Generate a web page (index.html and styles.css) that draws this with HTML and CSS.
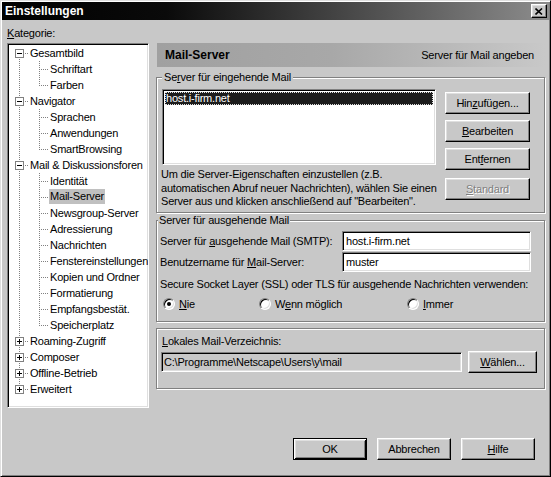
FILE: index.html
```html
<!DOCTYPE html>
<html lang="de">
<head>
<meta charset="utf-8">
<title>Einstellungen</title>
<link rel="stylesheet" href="styles.css">
</head>
<body>
<div class="window">
  <div class="titlebar">
    <span class="title">Einstellungen</span>
    <span class="close"><svg width="8" height="7" viewBox="0 0 8 7"><path d="M0.5 0.5L7 6.5M7 0.5L0.5 6.5" stroke="#000" stroke-width="1.6" fill="none"/></svg></span>
  </div>
  <div class="content">
    <div class="left">
      <div class="label"><u>K</u>ategorie:</div>
      <div class="tree">
        <div class="row"><span class="cell first"><svg class="box" width="9" height="9"><rect x="0.5" y="0.5" width="8" height="8" fill="#fff" stroke="#808080"/><path d="M2 4.5h5" stroke="#000"/></svg></span><span class="txt">Gesamtbild</span></div>
        <div class="row"><span class="cell v"></span><span class="cell tee"></span><span class="txt">Schriftart</span></div>
        <div class="row"><span class="cell v"></span><span class="cell ell"></span><span class="txt">Farben</span></div>
        <div class="row"><span class="cell mid"><svg class="box" width="9" height="9"><rect x="0.5" y="0.5" width="8" height="8" fill="#fff" stroke="#808080"/><path d="M2 4.5h5" stroke="#000"/></svg></span><span class="txt">Navigator</span></div>
        <div class="row"><span class="cell v"></span><span class="cell tee"></span><span class="txt">Sprachen</span></div>
        <div class="row"><span class="cell v"></span><span class="cell tee"></span><span class="txt">Anwendungen</span></div>
        <div class="row"><span class="cell v"></span><span class="cell ell"></span><span class="txt">SmartBrowsing</span></div>
        <div class="row"><span class="cell mid"><svg class="box" width="9" height="9"><rect x="0.5" y="0.5" width="8" height="8" fill="#fff" stroke="#808080"/><path d="M2 4.5h5" stroke="#000"/></svg></span><span class="txt">Mail &amp; Diskussionsforen</span></div>
        <div class="row"><span class="cell v"></span><span class="cell tee"></span><span class="txt">Identität</span></div>
        <div class="row"><span class="cell v"></span><span class="cell tee"></span><span class="txt selected">Mail-Server</span></div>
        <div class="row"><span class="cell v"></span><span class="cell tee"></span><span class="txt">Newsgroup-Server</span></div>
        <div class="row"><span class="cell v"></span><span class="cell tee"></span><span class="txt">Adressierung</span></div>
        <div class="row"><span class="cell v"></span><span class="cell tee"></span><span class="txt">Nachrichten</span></div>
        <div class="row"><span class="cell v"></span><span class="cell tee"></span><span class="txt">Fenstereinstellungen</span></div>
        <div class="row"><span class="cell v"></span><span class="cell tee"></span><span class="txt">Kopien und Ordner</span></div>
        <div class="row"><span class="cell v"></span><span class="cell tee"></span><span class="txt">Formatierung</span></div>
        <div class="row"><span class="cell v"></span><span class="cell tee"></span><span class="txt">Empfangsbestät.</span></div>
        <div class="row"><span class="cell v"></span><span class="cell ell"></span><span class="txt">Speicherplatz</span></div>
        <div class="row"><span class="cell mid"><svg class="box" width="9" height="9"><rect x="0.5" y="0.5" width="8" height="8" fill="#fff" stroke="#808080"/><path d="M2 4.5h5M4.5 2v5" stroke="#000"/></svg></span><span class="txt">Roaming-Zugriff</span></div>
        <div class="row"><span class="cell mid"><svg class="box" width="9" height="9"><rect x="0.5" y="0.5" width="8" height="8" fill="#fff" stroke="#808080"/><path d="M2 4.5h5M4.5 2v5" stroke="#000"/></svg></span><span class="txt">Composer</span></div>
        <div class="row"><span class="cell mid"><svg class="box" width="9" height="9"><rect x="0.5" y="0.5" width="8" height="8" fill="#fff" stroke="#808080"/><path d="M2 4.5h5M4.5 2v5" stroke="#000"/></svg></span><span class="txt">Offline-Betrieb</span></div>
        <div class="row"><span class="cell last"><svg class="box" width="9" height="9"><rect x="0.5" y="0.5" width="8" height="8" fill="#fff" stroke="#808080"/><path d="M2 4.5h5M4.5 2v5" stroke="#000"/></svg></span><span class="txt">Erweitert</span></div>
      </div>
    </div>
    <div class="right">
      <div class="header">
        <span class="h-title">Mail-Server</span>
        <span class="h-desc">Server für Mail angeben</span>
      </div>
      <div class="group g1">
        <div class="legend l1">Se<u>r</u>ver für eingehende Mail</div>
        <div class="g1-body">
          <div class="g1-main">
            <div class="listbox"><div class="item sel">host.i-firm.net</div></div>
            <div class="desc">Um die Server-Eigenschaften einzustellen (z.B.<br>automatischen Abruf neuer Nachrichten), wählen Sie einen<br>Server aus und klicken anschließend auf "Bearbeiten".</div>
          </div>
          <div class="g1-buttons">
            <div class="btn"><span>Hin<u>z</u>ufügen...</span></div>
            <div class="btn"><span><u>B</u>earbeiten</span></div>
            <div class="btn"><span>Ent<u>f</u>ernen</span></div>
            <div class="btn disabled std"><span><u>S</u>tandard</span></div>
          </div>
        </div>
      </div>
      <div class="group g2">
        <div class="legend l2">Server für ausgehende Mail</div>
        <div class="fields">
          <div class="flabel">Server für <u>a</u>usgehende Mail (SMTP):</div>
          <div class="input">host.i-firm.net</div>
          <div class="flabel">Benutzername für <u>M</u>ail-Server:</div>
          <div class="input">muster</div>
        </div>
        <div class="ssl">Secure Socket Layer (SSL) oder TLS für ausgehende Nachrichten verwenden:</div>
        <div class="radios">
          <div class="ropt o1"><span class="radio"><span class="dot"></span></span><span><u>N</u>ie</span></div>
          <div class="ropt o2"><span class="radio"></span><span>W<u>e</u>nn möglich</span></div>
          <div class="ropt"><span class="radio"></span><span><u>I</u>mmer</span></div>
        </div>
      </div>
      <div class="group g3">
        <div class="dlabel"><u>L</u>okales Mail-Verzeichnis:</div>
        <div class="dirrow">
          <div class="input path">C:\Programme\Netscape\Users\y\mail</div>
          <div class="btn choose"><span><u>W</u>ählen...</span></div>
        </div>
      </div>
    </div>
  </div>
  <div class="footer">
    <div class="btn fbtn default">OK</div>
    <div class="btn fbtn">Abbrechen</div>
    <div class="btn fbtn"><span><u>H</u>ilfe</span></div>
  </div>
</div>
</body>
</html>
```

FILE: styles.css
```css
* { box-sizing: border-box; }
html, body { margin: 0; padding: 0; }
body {
  width: 551px;
  height: 477px;
  overflow: hidden;
  background: #c8c8c8;
  font-family: "Liberation Sans", Arial, sans-serif;
  font-size: 11px;
  letter-spacing: -0.2px;
  color: #000;
}
u { text-decoration: underline; text-underline-offset: 1px; }

.window {
  width: 551px;
  height: 477px;
  border: 1px solid;
  border-color: #dfdfdf #000 #000 #dfdfdf;
  box-shadow: inset 1px 1px #fff, inset -1px -1px #808080;
  padding: 1px;
  display: flex;
  flex-direction: column;
  background: #c8c8c8;
}

.titlebar {
  height: 18px;
  flex: none;
  display: flex;
  align-items: center;
  justify-content: space-between;
  padding: 0 2px 0 3px;
  background: linear-gradient(to right, #000 0%, #0a0a0a 30%, #8c8c8c 100%);
  color: #fff;
}
.title { font-weight: bold; font-size: 12px; letter-spacing: 0; }
.close {
  width: 16px;
  height: 14px;
  background: #c8c8c8;
  border: 1px solid;
  border-color: #fff #000 #000 #fff;
  box-shadow: inset -1px -1px #808080, inset 1px 1px #dfdfdf;
  display: flex;
  align-items: center;
  justify-content: center;
}
.close svg { display: block; }

.content {
  height: 388px;
  flex: none;
  display: flex;
  padding-left: 5px;
}
.left { width: 142px; margin-top: 7px; }
.label { line-height: 13px; }
.tree {
  margin-top: 3px;
  height: 365px;
  background: #fff;
  border: 1px solid;
  border-color: #808080 #fff #fff #808080;
  box-shadow: inset 1px 1px #000, inset -1px -1px #dfdfdf;
  padding: 1px;
  overflow: hidden;
}
.row { display: flex; height: 16px; }
.cell {
  width: 20px;
  height: 16px;
  flex: none;
  background-repeat: no-repeat;
}
.v {
  background-image: repeating-linear-gradient(to bottom, #808080 0 1px, transparent 1px 2px);
  background-size: 1px 16px;
  background-position: 10px 0;
}
.tee {
  background-image:
    repeating-linear-gradient(to bottom, #808080 0 1px, transparent 1px 2px),
    repeating-linear-gradient(to right, #808080 0 1px, transparent 1px 2px);
  background-size: 1px 16px, 9px 1px;
  background-position: 10px 0, 12px 8px;
}
.ell {
  background-image:
    repeating-linear-gradient(to bottom, #808080 0 1px, transparent 1px 2px),
    repeating-linear-gradient(to right, #808080 0 1px, transparent 1px 2px);
  background-size: 1px 9px, 9px 1px;
  background-position: 10px 0, 12px 8px;
}
.first, .mid, .last {
  background-image:
    repeating-linear-gradient(to bottom, #808080 0 1px, transparent 1px 2px),
    repeating-linear-gradient(to right, #808080 0 1px, transparent 1px 2px);
  background-size: 1px 16px, 5px 1px;
  background-position: 10px 0, 16px 8px;
}
.first { background-size: 1px 8px, 5px 1px; background-position: 10px 8px, 16px 8px; }
.last { background-size: 1px 8px, 5px 1px; background-position: 10px 0, 16px 8px; }
.box { display: block; margin: 4px 0 0 6px; }
.txt { line-height: 16px; padding: 0 1px; white-space: nowrap; }
.txt.selected { background: #c0c0c0; line-height: 15px; height: 15px; }

.right { width: 389px; margin-left: 7px; margin-top: 23px; }
.header {
  margin-left: 1px;
  height: 24px;
  display: flex;
  align-items: center;
  justify-content: space-between;
  padding: 0 11px 0 8px;
  background: linear-gradient(to right, #a0a0a0 0%, #a8a8a8 45%, #c8c8c8 100%);
}
.h-title { font-weight: bold; font-size: 12px; letter-spacing: 0; }

.group {
  border: 1px solid #808080;
  box-shadow: inset 1px 1px #fff, 1px 1px #fff;
  display: flex;
  flex-direction: column;
  align-items: flex-start;
}
.legend {
  margin-top: -7px;
  line-height: 13px;
  background: #c8c8c8;
  white-space: nowrap;
}
.l1 { margin-left: 5px; padding: 0 2px; }
.l2 { margin-left: 1px; padding: 0 1px; }

.g1 { margin-top: 10px; height: 136px; width: 389px; }
.g1-body { display: flex; margin: 5px 0 0 5px; }
.g1-main { width: 274px; }
.listbox {
  width: 274px;
  height: 76px;
  background: #fff;
  border: 1px solid;
  border-color: #808080 #fff #fff #808080;
  box-shadow: inset 1px 1px #000, inset -1px -1px #dfdfdf;
  padding: 2px 2px;
}
.item { line-height: 13px; height: 13px; padding-left: 1px; white-space: nowrap; }
.item.sel {
  background: #1c1c1c;
  color: #fff;
  outline: 1px dotted #e0e0e0;
  outline-offset: -1px;
}
.desc { margin-top: 3px; margin-left: -1px; line-height: 13.5px; white-space: nowrap; }
.g1-buttons { margin: 3px 0 0 9px; display: flex; flex-direction: column; gap: 6px; }
.g1-buttons .btn { width: 85px; }
.g1-buttons .std { margin-top: 2px; }

.btn {
  height: 22px;
  display: flex;
  align-items: center;
  justify-content: center;
  background: #c8c8c8;
  border: 1px solid;
  border-color: #fff #000 #000 #fff;
  box-shadow: inset -1px -1px #808080, inset 1px 1px #dfdfdf;
  white-space: nowrap;
}
.btn.disabled { color: #808080; text-shadow: 1px 1px #fff; }

.g2 { margin-top: 7px; height: 102px; width: 389px; }
.fields {
  display: grid;
  grid-template-columns: 182px 189px;
  grid-auto-rows: 20px;
  row-gap: 1px;
  margin: 4px 0 0 3px;
}
.flabel { display: block; line-height: 20px; white-space: nowrap; }
.input {
  height: 20px;
  background: #fff;
  border: 1px solid;
  border-color: #808080 #fff #fff #808080;
  box-shadow: inset 1px 1px #000, inset -1px -1px #dfdfdf;
  padding: 0 3px;
  line-height: 18px;
  white-space: nowrap;
}
.ssl { margin: 6px 0 0 3px; line-height: 13px; white-space: nowrap; }
.radios { display: flex; margin: 6px 0 0 6px; height: 13px; align-items: center; }
.ropt { display: flex; align-items: center; gap: 4px; }
.o1 { width: 96px; }
.o2 { width: 148px; }
.radio {
  width: 12px;
  height: 12px;
  border-radius: 50%;
  background: #fff;
  border: 1px solid;
  border-color: #808080 #fff #fff #808080;
  box-shadow: inset 1px 1px #000, inset -1px -1px #dfdfdf;
  display: flex;
  align-items: center;
  justify-content: center;
  flex: none;
}
.dot { width: 4px; height: 4px; border-radius: 50%; background: #000; }

.g3 { margin-top: 6px; height: 61px; width: 389px; }
.dlabel { margin: 6px 0 0 5px; line-height: 13px; white-space: nowrap; }
.dirrow { display: flex; align-items: center; margin: 3px 0 0 4px; height: 22px; }
.path { width: 301px; background: #c8c8c8; padding-left: 2px; }
.choose { width: 69px; margin-left: 6px; }

.footer {
  display: flex;
  justify-content: flex-end;
  gap: 10px;
  padding: 30px 14px 0 0;
}
.fbtn { width: 74px; height: 22px; }
.fbtn.default {
  border-color: #000;
  box-shadow: inset 1px 1px #fff, inset -1px -1px #000, inset 2px 2px #dfdfdf, inset -2px -2px #808080;
}
```
